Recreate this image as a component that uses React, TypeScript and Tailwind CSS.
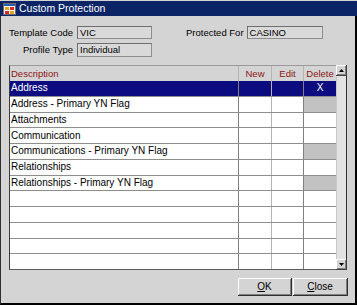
import React from 'react';

type Row = { text: string; gray?: boolean; selected?: boolean };

const rows: Row[] = [
  { text: 'Address', selected: true },
  { text: 'Address - Primary YN Flag', gray: true },
  { text: 'Attachments' },
  { text: 'Communication' },
  { text: 'Communications - Primary YN Flag', gray: true },
  { text: 'Relationships' },
  { text: 'Relationships - Primary YN Flag', gray: true },
  { text: '' },
  { text: '' },
  { text: '' },
  { text: '' },
  { text: '' },
];

const AppIcon = () => (
  <svg width="13" height="12" viewBox="0 0 13 12">
    <rect x="0.5" y="0.5" width="12" height="11" fill="#f4f4f4" stroke="#6b6b6b" />
    <rect x="1" y="1" width="11" height="2" fill="#2a5db0" />
    <rect x="2" y="4" width="4" height="3" fill="#e2a320" />
    <rect x="7" y="4" width="4" height="3" fill="#d22d1e" />
    <rect x="2" y="8" width="4" height="3" fill="#d22d1e" />
    <rect x="7" y="8" width="4" height="3" fill="#e2a320" />
  </svg>
);

const Field = ({ value, w, h }: { value: string; w: string; h: string }) => (
  <div
    className={`${w} ${h} bg-[#d9d9d9] border border-[#8e8e8e] border-t-[#6e6e6e] border-l-[#6e6e6e] pl-[2px] leading-[11px] text-[9.5px] text-black`}
  >
    {value}
  </div>
);

const Arrow = ({ up }: { up?: boolean }) => (
  <div className="h-[11px] w-[11px] bg-[#d4d4d4] border-r border-b border-[#404040] shadow-[inset_1px_1px_0_#ffffff,inset_-1px_-1px_0_#808080] flex items-center justify-center">
    <svg width="5" height="3" viewBox="0 0 5 3">
      {up ? <polygon points="2.5,0 5,3 0,3" fill="#000" /> : <polygon points="0,0 5,0 2.5,3" fill="#000" />}
    </svg>
  </div>
);

export default function App() {
  return (
    <div className="w-[357px] h-[305px] bg-[#d4d4d4] font-['Liberation_Sans',Arial,sans-serif] text-black overflow-hidden flex flex-col">
      {/* Title bar */}
      <div className="h-[15px] mt-px bg-[#0b2466] flex items-center pl-[3px] shrink-0">
        <AppIcon />
        <span className="ml-[3px] text-white text-[10.5px] leading-none">Custom Protection</span>
      </div>

      <div className="flex-1 flex flex-col border-l border-r-2 border-b-2 border-l-[#303030] border-r-black border-b-black">
        {/* Form */}
        <div className="flex items-center mt-[10px]">
          <span className="w-[72px] text-right text-[9.5px] leading-none">Template Code</span>
          <div className="ml-[4px]">
            <Field value="VIC" w="w-[75px]" h="h-[13px]" />
          </div>
          <span className="ml-[34px] text-[9.5px] leading-none">Protected For</span>
          <div className="ml-[3px]">
            <Field value="CASINO" w="w-[76px]" h="h-[13px]" />
          </div>
        </div>
        <div className="flex items-center mt-[4px]">
          <span className="w-[72px] text-right text-[9.5px] leading-none">Profile Type</span>
          <div className="ml-[4px]">
            <Field value="Individual" w="w-[75px]" h="h-[14px]" />
          </div>
        </div>

        {/* Table */}
        <div className="mt-[8px] ml-[8px] flex w-[338px] h-[205px]">
          <div className="w-[327px] flex flex-col border-l border-t border-b border-l-[#3c3c3c] border-t-[#9a9a9a] border-b-[#5a5a5a]">
            <div className="h-[15px] flex text-[9.5px] text-[#8c1414] leading-none shrink-0">
              <div className="w-[229px] pl-[1px] flex items-center border-r border-[#b4b4b4]">Description</div>
              <div className="w-[33px] flex items-center justify-center border-r border-[#b4b4b4]">New</div>
              <div className="w-[32px] flex items-center justify-center border-r border-[#b4b4b4]">Edit</div>
              <div className="w-[32px] flex items-center justify-center">Delete</div>
            </div>
            <div className="flex-1 flex flex-col">
              {rows.map((r, i) => (
                <div
                  key={i}
                  className={`flex-1 flex text-[10px] leading-none ${
                    i < rows.length - 1 ? 'border-b border-[#8e8e8e]' : ''
                  } ${r.selected ? 'bg-[#0c0c80] text-white' : 'bg-white'}`}
                >
                  <div className="w-[229px] pl-[1px] flex items-center border-r border-[#808080]">{r.text}</div>
                  <div className="w-[33px] border-r border-[#b4b4b4]" />
                  <div className="w-[32px] border-r border-[#808080]" />
                  <div
                    className={`w-[32px] flex items-center justify-center ${r.gray ? 'bg-[#c2c2c2]' : ''}`}
                  >
                    {r.selected ? 'X' : ''}
                  </div>
                </div>
              ))}
            </div>
          </div>
          {/* Scrollbar */}
          <div className="w-[11px] flex flex-col bg-[#e2e2e2] border-r border-[#303030]">
            <Arrow up />
            <div className="flex-1 border-l border-[#c8c8c8]" />
            <Arrow />
          </div>
        </div>

        {/* Buttons */}
        <div className="mt-[8px] flex justify-end pr-[7px] gap-px">
          <button className="w-[54px] h-[18px] bg-[#d4d4d4] border-r border-b border-[#303030] shadow-[inset_1px_1px_0_#ffffff,inset_-1px_-1px_0_#808080] text-[10px] leading-none">
            <span className="underline">O</span>K
          </button>
          <button className="w-[55px] h-[18px] bg-[#d4d4d4] border-r border-b border-[#303030] shadow-[inset_1px_1px_0_#ffffff,inset_-1px_-1px_0_#808080] text-[10px] leading-none">
            <span className="underline">C</span>lose
          </button>
        </div>
      </div>
    </div>
  );
}
